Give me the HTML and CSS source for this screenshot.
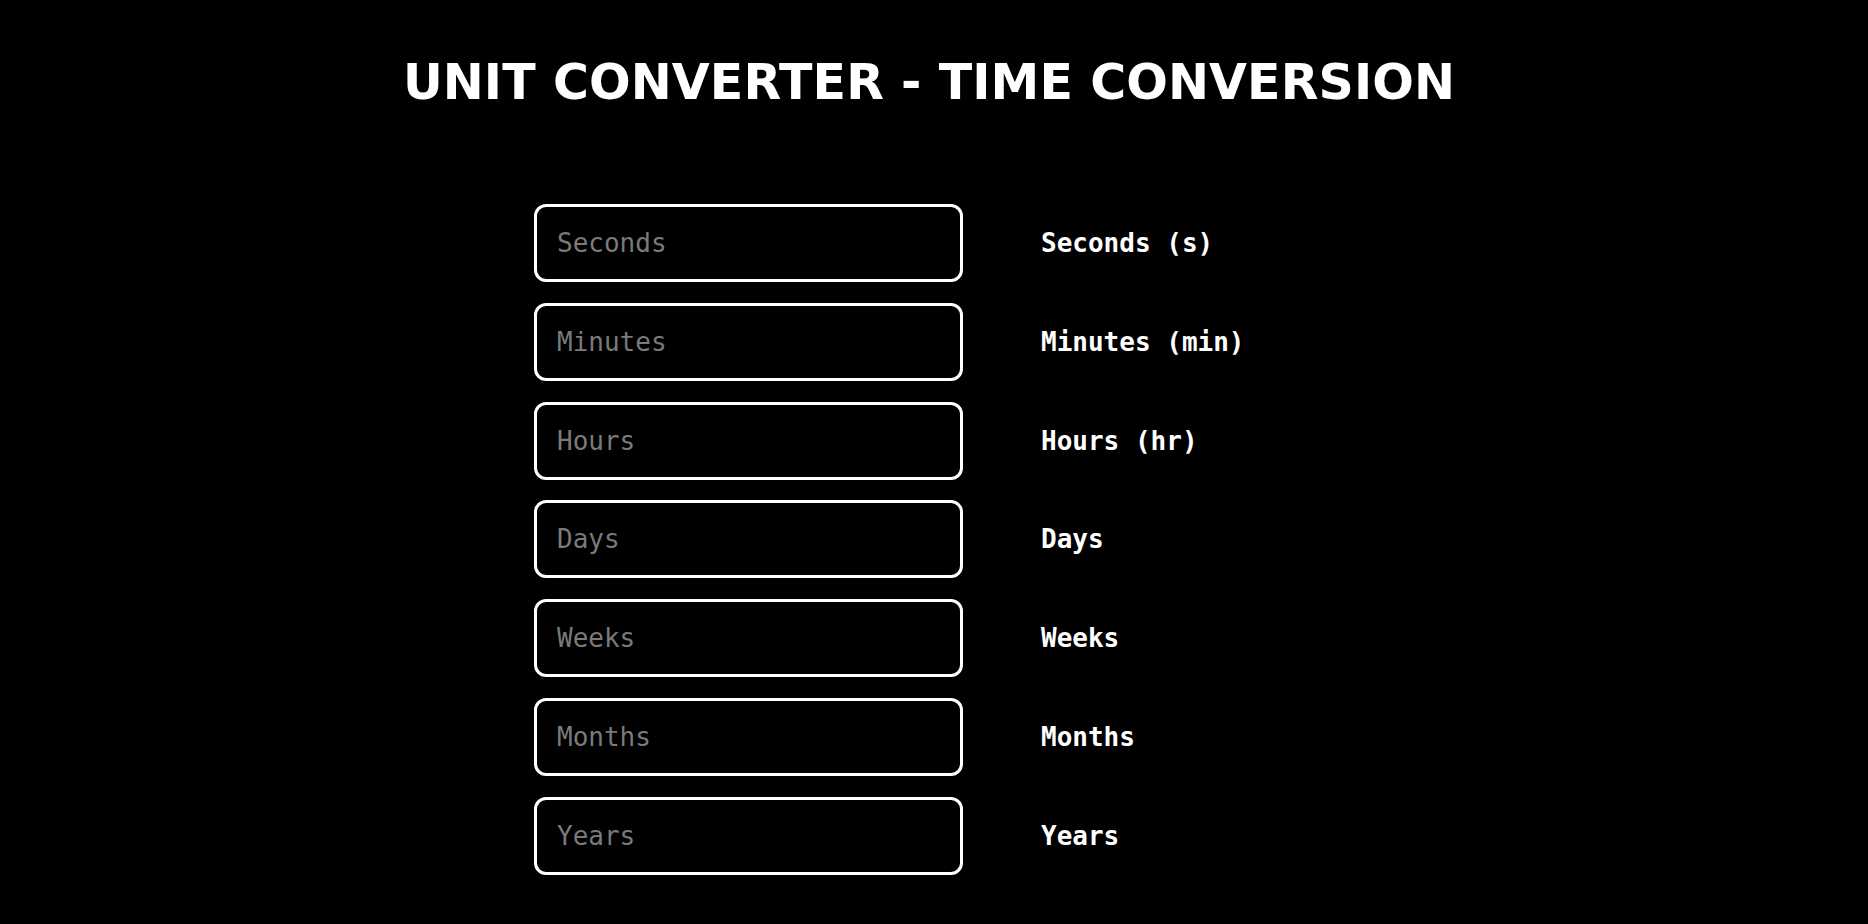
FILE: index.html
```html
<!DOCTYPE html>
<html lang="en">
<head>
<meta charset="utf-8">
<title>Unit Converter - Time Conversion</title>
<link rel="stylesheet" href="styles.css">
</head>
<body>
<h1 class="title">UNIT CONVERTER - TIME CONVERSION</h1>
<div class="converter">
  <input class="field" type="text" placeholder="Seconds"><label class="unit">Seconds (s)</label>
  <input class="field" type="text" placeholder="Minutes"><label class="unit">Minutes (min)</label>
  <input class="field" type="text" placeholder="Hours"><label class="unit">Hours (hr)</label>
  <input class="field" type="text" placeholder="Days"><label class="unit">Days</label>
  <input class="field" type="text" placeholder="Weeks"><label class="unit">Weeks</label>
  <input class="field" type="text" placeholder="Months"><label class="unit">Months</label>
  <input class="field" type="text" placeholder="Years"><label class="unit">Years</label>
</div>
</body>
</html>
```
FILE: styles.css
```css
html, body {
  margin: 0;
  padding: 0;
  background: #000;
  color: #fff;
}
body {
  height: 924px;
  overflow: hidden;
}
.title {
  margin: 0;
  padding: 54px 10px 0 0;
  text-align: center;
  font-family: "DejaVu Sans", Verdana, sans-serif;
  font-weight: bold;
  font-size: 49px;
  line-height: 58px;
  letter-spacing: 0.1px;
  color: #fff;
}
.converter {
  width: 800px;
  margin: 92px auto 0;
  display: grid;
  grid-template-columns: 429px auto;
  column-gap: 78px;
  row-gap: 20.8px;
  align-items: center;
  justify-content: start;
}
.field {
  box-sizing: border-box;
  width: 429px;
  height: 78px;
  margin: 0;
  padding: 0 20px;
  border: 3px solid #fff;
  border-radius: 12px;
  background: #000;
  color: #fff;
  font-family: "DejaVu Sans Mono", monospace;
  font-size: 26px;
  outline: none;
}
.field::placeholder {
  color: #7a7a7a;
  opacity: 1;
}
.unit {
  font-family: "DejaVu Sans Mono", monospace;
  font-weight: bold;
  font-size: 26px;
  color: #fff;
}
```
